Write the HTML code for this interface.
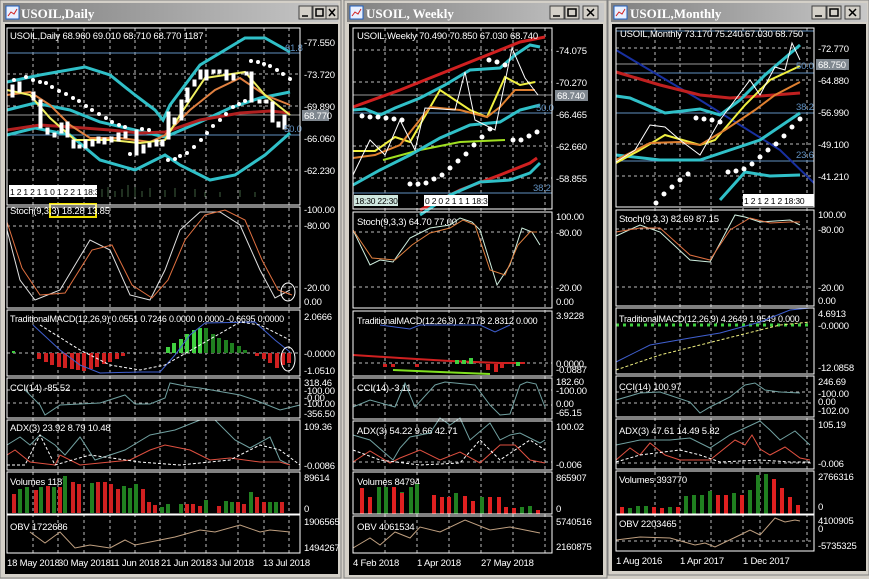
<!DOCTYPE html>
<html><head><meta charset="utf-8"><style>
html,body{margin:0;padding:0;width:869px;height:579px;overflow:hidden;background:#d4d0c8}
svg{position:absolute;left:0;top:0}
text{font-family:"Liberation Sans",sans-serif;font-size:9.5px;letter-spacing:-0.2px;fill:#fff}
.t{font-family:"Liberation Serif",serif;font-weight:bold;font-size:13px;fill:#fff;letter-spacing:0}
.g{stroke:#bbb;stroke-dasharray:3,3;stroke-width:1;fill:none}
.p{fill:none;stroke:#fff;stroke-width:1}
.cy{fill:none;stroke:#30c0c8;stroke-width:3}
.l{fill:none;stroke-width:1}
</style></head><body>
<svg width="869" height="579" viewBox="0 0 869 579">
<defs>
<linearGradient id="tb" x1="0" x2="1"><stop offset="0" stop-color="#808080"/><stop offset="1" stop-color="#c8c8c8"/></linearGradient>
</defs>
<rect x="0" y="0" width="341" height="578" fill="#d4d0c8" stroke="#808080"/>
<rect x="344" y="0" width="263" height="578" fill="#d4d0c8" stroke="#808080"/>
<rect x="608" y="0" width="261" height="575" fill="#d4d0c8" stroke="#808080"/>
<rect x="3" y="3" width="335" height="19" fill="url(#tb)"/>
<rect x="347" y="3" width="257" height="19" fill="url(#tb)"/>
<rect x="611" y="3" width="256" height="19" fill="url(#tb)"/>
<g><rect x="6" y="6" width="13" height="13" fill="#e8f0ff" stroke="#2060c0"/><path d="M8 16l3-4 3 2 3-5" stroke="#d02020" fill="none"/></g>
<g><rect x="350" y="6" width="13" height="13" fill="#e8f0ff" stroke="#2060c0"/><path d="M352 16l3-4 3 2 3-5" stroke="#d02020" fill="none"/></g>
<g><rect x="614" y="6" width="13" height="13" fill="#e8f0ff" stroke="#2060c0"/><path d="M616 16l3-4 3 2 3-5" stroke="#d02020" fill="none"/></g>
<text class="t" x="21" y="18">USOIL,Daily</text>
<text class="t" x="366" y="18">USOIL, Weekly</text>
<text class="t" x="630" y="18">USOIL,Monthly</text>
<g fill="#d4d0c8" stroke="#404040">
<rect x="299" y="6" width="13" height="13"/><rect x="313" y="6" width="13" height="13"/><rect x="326" y="6" width="12" height="13"/>
<rect x="550" y="6" width="14" height="13"/><rect x="565" y="6" width="14" height="13"/><rect x="583" y="6" width="15" height="13"/>
<rect x="812" y="6" width="14" height="13"/><rect x="827" y="6" width="14" height="13"/><rect x="845" y="6" width="15" height="13"/>
</g>
<g stroke="#000" stroke-width="1.5" fill="none">
<path d="M302 16h6M316 9h7v7h-7zM329 9l6 7M335 9l-6 7"/>
<path d="M553 16h7M568 9h8v7h-8zM587 9l7 7M594 9l-7 7"/>
<path d="M815 16h7M830 9h8v7h-8zM849 9l7 7M856 9l-7 7"/>
</g>
<rect x="5" y="24" width="333" height="550" fill="#000"/>
<rect x="349" y="24" width="254" height="551" fill="#000"/>
<rect x="612" y="24" width="254" height="547" fill="#000"/>

<!-- ================= WINDOW 1 ================= -->
<g>
<g class="g">
<path d="M33 28V553M58 28V553M84 28V553M110 28V553M135 28V553M160 28V553M185 28V553M206 28V553M238 28V553M264 28V553M289 28V553"/>
<path d="M7 74H300M7 106H300M7 170H300M7 226H300M7 287H300M7 353H300M7 390H300M7 403H300"/>
</g>
<path d="M7 53H300M7 135H300" stroke="#6090c0" fill="none"/>
<path d="M7 115H300" stroke="#999" fill="none"/>
<polyline class="cy" points="7,82 40,75 85,67 110,75 135,95 155,110 163,120 170,105 200,65 245,38 265,38 290,52"/>
<polyline class="cy" points="7,135 35,128 70,135 100,160 135,170 155,160 165,155 180,165 210,180 235,175 265,155 290,133"/>
<polyline class="cy" points="7,110 35,103 70,110 100,122 135,130 165,137 200,122 230,108 260,98 290,92"/>
<polyline points="7,130 40,125 70,127 110,130 140,133 165,132 200,120 240,113 270,111 290,113" fill="none" stroke="#b02020" stroke-width="3"/>
<polyline points="7,95 30,92 50,105 70,125 90,138 120,138 150,142 165,135 190,110 215,90 240,78 265,95 290,105" fill="none" stroke="#e08040" stroke-width="2"/>
<polyline points="7,90 30,95 50,118 75,140 110,140 140,143 165,140 180,115 205,78 245,72 265,95 290,115" fill="none" stroke="#f0f060" stroke-width="2"/>
<g fill="#fff" stroke="#fff">
<rect x="11" y="85" width="3" height="12"/><rect x="18" y="82" width="3" height="10"/><rect x="32" y="92" width="3" height="8"/><rect x="39" y="100" width="3" height="28"/><rect x="46" y="128" width="3" height="6"/><rect x="53" y="133" width="3" height="4"/><rect x="60" y="123" width="3" height="10"/><rect x="66" y="122" width="3" height="15"/><rect x="72" y="140" width="3" height="8"/><rect x="78" y="145" width="3" height="3"/><rect x="84" y="140" width="3" height="8"/><rect x="91" y="140" width="3" height="6"/><rect x="97" y="137" width="3" height="6"/><rect x="103" y="138" width="3" height="6"/><rect x="110" y="137" width="3" height="5"/><rect x="117" y="133" width="3" height="8"/><rect x="124" y="132" width="3" height="6"/><rect x="135" y="130" width="3" height="25"/><rect x="142" y="145" width="3" height="8"/><rect x="148" y="143" width="3" height="4"/><rect x="155" y="140" width="3" height="6"/><rect x="161" y="140" width="3" height="6"/><rect x="167" y="112" width="3" height="27"/><rect x="173" y="118" width="3" height="6"/><rect x="180" y="100" width="3" height="20"/><rect x="186" y="88" width="3" height="14"/><rect x="193" y="80" width="3" height="6"/><rect x="199" y="70" width="3" height="9"/><rect x="205" y="70" width="3" height="10"/><rect x="212" y="70" width="3" height="3"/><rect x="218" y="70" width="3" height="3"/><rect x="225" y="70" width="3" height="10"/><rect x="232" y="74" width="3" height="6"/><rect x="245" y="72" width="3" height="3"/><rect x="250" y="72" width="3" height="30"/><rect x="258" y="100" width="3" height="3"/><rect x="265" y="100" width="3" height="3"/><rect x="271" y="102" width="3" height="20"/><rect x="277" y="122" width="3" height="5"/><rect x="283" y="115" width="3" height="14"/>
</g>
<g fill="#fff">
<circle cx="14" cy="80" r="2"/><circle cx="26" cy="77" r="2"/><circle cx="33" cy="80" r="2"/><circle cx="40" cy="82" r="2"/><circle cx="46" cy="83" r="2"/><circle cx="52" cy="87" r="2"/><circle cx="59" cy="91" r="2"/><circle cx="66" cy="94" r="2"/><circle cx="73" cy="98" r="2"/><circle cx="79" cy="101" r="2"/><circle cx="86" cy="106" r="2"/><circle cx="92" cy="110" r="2"/><circle cx="99" cy="114" r="2"/><circle cx="106" cy="118" r="2"/><circle cx="112" cy="122" r="2"/><circle cx="119" cy="125" r="2"/><circle cx="125" cy="127" r="2"/><circle cx="130" cy="154" r="2"/><circle cx="142" cy="129" r="2"/><circle cx="149" cy="130" r="2"/><circle cx="168" cy="160" r="2"/><circle cx="175" cy="159" r="2"/><circle cx="180" cy="156" r="2"/><circle cx="187" cy="153" r="2"/><circle cx="194" cy="147" r="2"/><circle cx="201" cy="140" r="2"/><circle cx="207" cy="133" r="2"/><circle cx="213" cy="126" r="2"/><circle cx="220" cy="120" r="2"/><circle cx="226" cy="114" r="2"/><circle cx="233" cy="107" r="2"/><circle cx="239" cy="104" r="2"/><circle cx="245" cy="101" r="2"/><circle cx="251" cy="61" r="2"/><circle cx="258" cy="62" r="2"/><circle cx="264" cy="64" r="2"/><circle cx="270" cy="66" r="2"/><circle cx="277" cy="70" r="2"/><circle cx="283" cy="74" r="2"/><circle cx="290" cy="79" r="2"/>
</g>
<rect x="9" y="185" width="88" height="12" fill="#fff"/>
<text x="10" y="195" style="fill:#000;font-size:8.5px">1 2 1 2 1 1 0 1 2 2 1 18:30</text>
<path d="M102 197v-8M108 197v-10M115 197v-6M122 197v-8M128 197v-12M135 197v-10M142 197v-6M150 197v-9M165 197v-7M175 197v-9M195 197v-8M205 197v-5M220 197v-5M240 197v-7M255 197v-5" stroke="#406040" fill="none"/>
<text x="10" y="39">USOIL,Daily  68.960 69.010 68.710 68.770  1187</text>
<text x="285" y="51" style="fill:#6090c0">61.8</text>
<text x="284" y="132" style="fill:#6090c0">50.0</text>
<rect x="50" y="204" width="46" height="13" fill="none" stroke="#f0e000" stroke-width="2"/>
<text x="10" y="214">Stoch(9,3,3) 18.28 13.85</text>
<polyline class="l" stroke="#e0e0e0" points="7,230 20,280 35,300 60,290 90,240 110,250 130,295 150,300 165,270 180,230 200,212 220,212 240,225 260,270 275,298 290,290"/>
<polyline class="l" stroke="#e07040" points="7,222 22,268 40,295 65,293 92,250 112,245 132,285 152,298 168,280 185,240 205,215 225,210 245,220 262,260 278,290 292,295"/>
<ellipse cx="288" cy="292" rx="7" ry="9" fill="none" stroke="#fff"/>
<text x="10" y="322" style="font-size:9px">TraditionalMACD(12,26,9) 0.0551 0.7246 0.0000 0.0000 -0.6695 0.0000</text>
<g fill="#d02020"><rect x="37" y="353" width="4" height="6"/><rect x="44" y="353" width="4" height="9"/><rect x="50" y="353" width="4" height="12"/><rect x="57" y="353" width="4" height="14"/><rect x="63" y="353" width="4" height="15"/><rect x="70" y="353" width="4" height="16"/><rect x="76" y="353" width="4" height="17"/><rect x="82" y="353" width="4" height="18"/><rect x="89" y="353" width="4" height="16"/><rect x="95" y="353" width="4" height="14"/><rect x="102" y="353" width="4" height="11"/><rect x="108" y="353" width="4" height="9"/><rect x="115" y="353" width="4" height="6"/><rect x="121" y="353" width="4" height="3"/><rect x="255" y="353" width="4" height="3"/><rect x="262" y="353" width="4" height="6"/><rect x="268" y="353" width="4" height="10"/><rect x="275" y="353" width="4" height="15"/><rect x="281" y="353" width="4" height="12"/><rect x="287" y="353" width="4" height="10"/></g>
<g fill="#40d040"><rect x="12" y="351" width="3" height="2"/><rect x="166" y="347" width="4" height="6"/><rect x="172" y="343" width="4" height="10"/><rect x="179" y="339" width="4" height="14"/><rect x="185" y="334" width="4" height="19"/><rect x="192" y="330" width="4" height="23"/><rect x="198" y="328" width="4" height="25"/></g>
<g fill="#208020"><rect x="204" y="328" width="4" height="25"/><rect x="211" y="334" width="4" height="19"/><rect x="217" y="338" width="4" height="15"/><rect x="224" y="340" width="4" height="13"/><rect x="230" y="343" width="4" height="10"/><rect x="237" y="346" width="4" height="7"/><rect x="243" y="350" width="4" height="3"/></g>
<polyline class="l" stroke="#4060d0" points="33,325 60,350 80,365 100,373 140,372 160,372 175,355 190,335 205,323 255,322 275,340 290,352"/>
<polyline class="l" stroke="#fff" stroke-dasharray="3,2" points="40,325 80,350 110,365 140,370 165,365 200,345 240,322 260,325 290,340"/>
<ellipse cx="288" cy="359" rx="7" ry="12" fill="none" stroke="#fff"/>
<text x="10" y="391">CCI(14) -85.52</text>
<polyline class="l" stroke="#70a0a0" points="25,390 40,405 45,415 60,405 100,403 125,395 135,404 150,404 165,398 170,383 185,386 200,388 240,395 255,400 280,410 300,405"/>
<text x="10" y="431">ADX(3) 23.92 8.79 10.48</text>
<polyline class="l" stroke="#70a0a0" points="7,445 20,437 30,445 40,435 55,445 65,455 80,437 95,460 125,450 150,435 175,430 200,420 215,420 235,440 250,448 270,437 280,460 290,465"/>
<polyline class="l" stroke="#e05040" points="7,455 15,450 30,462 55,465 60,455 80,465 110,462 130,460 150,450 165,445 190,450 210,460 230,458 260,462 280,462 290,465"/>
<polyline class="l" stroke="#fff" stroke-dasharray="3,2" points="7,465 25,465 40,435 55,465 90,455 140,462 180,465 230,460 260,445 280,450 300,465"/>
<text x="10" y="485">Volumes 1187</text>
<g fill="#d02020"><rect x="12" y="494" width="4" height="19"/><rect x="34" y="490" width="4" height="23"/><rect x="46" y="486" width="4" height="27"/><rect x="58" y="487" width="4" height="26"/><rect x="71" y="482" width="4" height="31"/><rect x="77" y="484" width="4" height="29"/><rect x="96" y="482" width="4" height="31"/><rect x="103" y="482" width="4" height="31"/><rect x="109" y="484" width="4" height="29"/><rect x="116" y="489" width="4" height="24"/><rect x="141" y="489" width="4" height="24"/><rect x="147" y="502" width="4" height="11"/><rect x="153" y="505" width="4" height="8"/><rect x="185" y="504" width="4" height="9"/><rect x="191" y="504" width="4" height="9"/><rect x="198" y="506" width="4" height="7"/><rect x="217" y="506" width="4" height="7"/><rect x="236" y="502" width="4" height="11"/><rect x="242" y="504" width="4" height="9"/><rect x="255" y="497" width="4" height="16"/><rect x="262" y="502" width="4" height="11"/><rect x="280" y="502" width="4" height="11"/></g>
<g fill="#208020"><rect x="18" y="489" width="4" height="24"/><rect x="25" y="487" width="4" height="26"/><rect x="39" y="487" width="4" height="26"/><rect x="52" y="487" width="4" height="26"/><rect x="63" y="476" width="4" height="37"/><rect x="90" y="483" width="4" height="30"/><rect x="122" y="486" width="4" height="27"/><rect x="128" y="488" width="4" height="25"/><rect x="134" y="484" width="4" height="29"/><rect x="160" y="507" width="4" height="6"/><rect x="166" y="504" width="4" height="9"/><rect x="179" y="504" width="4" height="9"/><rect x="204" y="500" width="4" height="13"/><rect x="224" y="501" width="4" height="12"/><rect x="230" y="502" width="4" height="11"/><rect x="249" y="492" width="4" height="21"/><rect x="268" y="502" width="4" height="11"/><rect x="274" y="502" width="4" height="11"/></g>
<text x="10" y="530">OBV 1722686</text>
<polyline class="l" stroke="#c0a080" points="30,532 45,543 60,532 75,548 90,545 110,548 125,540 135,545 150,542 175,537 200,530 215,532 240,525 260,532 270,530 290,532"/>
<g fill="none" stroke="#fff"><rect x="7" y="28" width="293" height="177"/><rect x="7" y="207" width="293" height="101"/><rect x="7" y="310" width="293" height="66"/><rect x="7" y="378" width="293" height="40"/><rect x="7" y="420" width="293" height="50"/><rect x="7" y="472" width="293" height="42"/><rect x="7" y="515" width="293" height="38"/></g>
<g>
<text x="304" y="46">-77.550</text><text x="304" y="78">-73.720</text><text x="304" y="110">-69.890</text><rect x="302" y="110" width="27" height="11" fill="#808890"/><text x="304" y="119">68.770</text><text x="304" y="142">-66.060</text><text x="304" y="174">-62.230</text>
<text x="304" y="213">-100.00</text><text x="304" y="229">-80.00</text><text x="304" y="291">-20.00</text><text x="304" y="305">0.00</text>
<text x="304" y="320">2.0666</text><text x="304" y="357">-0.0000</text><text x="304" y="374">-1.0510</text>
<text x="304" y="386">318.46</text><text x="304" y="394">-100.00</text><text x="304" y="401">-0.00</text><text x="304" y="407">-100.00</text><text x="304" y="417">-356.50</text>
<text x="304" y="430">109.36</text><text x="304" y="469">-0.0086</text>
<text x="304" y="481">89614</text><text x="304" y="512">0</text>
<text x="304" y="525">1906565</text><text x="304" y="551">1494267</text>
<text x="7" y="566">18 May 2018</text><text x="58" y="566">30 May 2018</text><text x="110" y="566">11 Jun 2018</text><text x="161" y="566">21 Jun 2018</text><text x="212" y="566">3 Jul 2018</text><text x="263" y="566">13 Jul 2018</text>
</g>
</g>

<!-- ================= WINDOW 2 ================= -->
<g>
<g class="g">
<path d="M385 28V553M417 28V553M449 28V553M481 28V553M513 28V553M545 28V553"/>
<path d="M353 50H552M353 82H552M353 146H552M353 178H552M353 232H552M353 287H552M353 363H552M353 390H552M353 405H552M353 462H552"/>
</g>
<path d="M353 113H552M353 193H552" stroke="#6090c0" fill="none"/>
<path d="M353 95H552" stroke="#999" fill="none"/>
<polyline points="353,107 400,90 450,70 520,42 545,37" fill="none" stroke="#d02020" stroke-width="3"/>
<polyline points="420,210 460,190 500,175 530,163 537,158" fill="none" stroke="#d02020" stroke-width="3"/>
<polyline points="383,160 420,150 460,142 505,140" fill="none" stroke="#a0e020" stroke-width="2"/>
<polyline class="cy" points="353,110 365,109 380,115 395,108 420,98 445,85 470,70 500,68 515,55 530,45 540,47"/>
<polyline class="cy" points="353,185 380,170 410,155 440,138 470,125 500,122 520,110 540,105"/>
<polyline class="cy" points="420,215 450,195 480,182 510,180 530,173 540,163"/>
<polyline points="353,151 375,151 395,137 410,142 440,90 470,110 487,117 505,77 520,85 535,82" fill="none" stroke="#f0f040" stroke-width="2"/>
<polyline points="353,158 375,155 400,145 430,107 460,110 487,117 500,107 515,90 535,90" fill="none" stroke="#e08030" stroke-width="2"/>
<polyline class="l" stroke="#fff" points="353,175 370,140 385,155 400,120 415,150 425,108 455,110 465,72 475,120 495,130 512,48 525,78 538,95"/>
<g fill="#fff"><circle cx="362" cy="116" r="2.5"/><circle cx="370" cy="117" r="2.5"/><circle cx="378" cy="117" r="2.5"/><circle cx="386" cy="118" r="2.5"/><circle cx="394" cy="119" r="2.5"/><circle cx="402" cy="120" r="2.5"/><circle cx="410" cy="184" r="2.5"/><circle cx="418" cy="184" r="2.5"/><circle cx="426" cy="183" r="2.5"/><circle cx="434" cy="179" r="2.5"/><circle cx="442" cy="175" r="2.5"/><circle cx="450" cy="168" r="2.5"/><circle cx="458" cy="161" r="2.5"/><circle cx="466" cy="154" r="2.5"/><circle cx="474" cy="145" r="2.5"/><circle cx="482" cy="137" r="2.5"/><circle cx="490" cy="129" r="2.5"/><circle cx="489" cy="60" r="2.5"/><circle cx="497" cy="62" r="2.5"/><circle cx="505" cy="65" r="2.5"/><circle cx="513" cy="140" r="2.5"/><circle cx="521" cy="140" r="2.5"/><circle cx="529" cy="136" r="2.5"/><circle cx="537" cy="132" r="2.5"/></g>
<rect x="354" y="195" width="44" height="11" fill="#d0e8e0"/><rect x="424" y="195" width="64" height="11" fill="#fff"/>
<text x="355" y="204" style="fill:#000;font-size:8.5px">18:30 22:30</text>
<text x="425" y="204" style="fill:#000;font-size:8.5px">0 2 0 2 1 1 1 18:30</text>
<text x="357" y="39">USOIL,Weekly  70.490 70.850 67.030 68.740</text>
<text x="536" y="111" style="fill:#6090c0">50.0</text>
<text x="533" y="191" style="fill:#6090c0">38.2</text>
<text x="357" y="225">Stoch(9,3,3) 64.70 77.00</text>
<polyline class="l" stroke="#d0f0e0" points="353,230 370,265 380,260 393,262 410,238 430,228 450,225 460,218 472,222 480,230 497,285 510,265 522,228 532,232 540,245"/>
<polyline class="l" stroke="#e08040" points="353,230 372,258 395,260 412,245 430,233 450,228 463,220 475,225 490,270 505,275 518,245 530,232 537,232"/>
<text x="357" y="324" style="font-size:9px">TraditionalMACD(12,26,9) 2.7178 2.8312 0.000</text>
<polyline class="l" stroke="#4060d0" points="380,325 410,329 420,325 480,325 495,332 510,325"/>
<polyline points="353,355 400,358 450,361 500,363 525,363" fill="none" stroke="#d02020" stroke-width="2"/>
<polyline points="393,370 440,372 490,374" fill="none" stroke="#80e020" stroke-width="2"/>
<g fill="#40d040"><rect x="455" y="360" width="4" height="4"/><rect x="462" y="360" width="4" height="4"/><rect x="469" y="358" width="4" height="6"/><rect x="516" y="362" width="4" height="4"/></g>
<g fill="#d02020"><rect x="383" y="364" width="4" height="3"/><rect x="391" y="364" width="4" height="3"/><rect x="415" y="364" width="4" height="3"/><rect x="486" y="364" width="4" height="6"/><rect x="494" y="364" width="4" height="8"/><rect x="500" y="364" width="4" height="4"/></g>
<text x="357" y="391">CCI(14) -3.11</text>
<polyline class="l" stroke="#70a0a0" points="353,407 370,400 395,407 405,383 415,407 435,385 445,382 475,385 490,405 500,415 510,414 520,385 527,382 536,384 545,407"/>
<text x="357" y="434">ADX(3) 54.22 9.66 42.71</text>
<polyline class="l" stroke="#70a0a0" points="353,435 370,440 393,460 400,448 410,437 430,433 440,418 450,425 460,418 470,440 490,423 500,440 510,435 520,433 540,443 545,440"/>
<polyline class="l" stroke="#e05040" points="353,462 370,451 390,463 400,458 420,450 440,460 460,452 480,463 500,445 515,445 530,460 545,463"/>
<polyline class="l" stroke="#fff" stroke-dasharray="3,2" points="353,450 380,460 420,465 460,463 480,440 500,460 530,440 545,450"/>
<text x="357" y="485">Volumes 84794</text>
<g fill="#208020"><rect x="377" y="487" width="4" height="27"/><rect x="384" y="487" width="4" height="27"/><rect x="400" y="492" width="4" height="22"/><rect x="409" y="487" width="4" height="27"/><rect x="415" y="484" width="4" height="30"/><rect x="454" y="493" width="4" height="21"/><rect x="480" y="497" width="4" height="17"/><rect x="520" y="507" width="4" height="7"/><rect x="528" y="506" width="4" height="8"/></g>
<g fill="#e02020"><rect x="360" y="488" width="4" height="26"/><rect x="368" y="497" width="4" height="17"/><rect x="392" y="487" width="4" height="27"/><rect x="400" y="493" width="4" height="21"/><rect x="432" y="495" width="4" height="19"/><rect x="440" y="497" width="4" height="17"/><rect x="447" y="497" width="4" height="17"/><rect x="463" y="496" width="4" height="18"/><rect x="471" y="501" width="4" height="13"/><rect x="488" y="497" width="4" height="17"/><rect x="497" y="497" width="4" height="17"/><rect x="504" y="507" width="4" height="7"/><rect x="512" y="508" width="4" height="6"/><rect x="536" y="510" width="4" height="4"/></g>
<text x="357" y="530">OBV 4061534</text>
<polyline class="l" stroke="#c0a080" points="353,548 370,538 380,545 395,532 410,538 420,527 440,532 465,520 490,530 510,527 525,530 540,533"/>
<g fill="none" stroke="#fff"><rect x="353" y="28" width="199" height="181"/><rect x="353" y="212" width="199" height="96"/><rect x="353" y="311" width="199" height="65"/><rect x="353" y="378" width="199" height="41"/><rect x="353" y="421" width="199" height="49"/><rect x="353" y="472" width="199" height="42"/><rect x="353" y="516" width="199" height="37"/></g>
<g>
<text x="556" y="54">-74.075</text><text x="556" y="86">-70.270</text><rect x="555" y="90" width="33" height="11" fill="#808890"/><text x="557" y="99">68.740</text><text x="556" y="118">-66.465</text><text x="556" y="150">-62.660</text><text x="556" y="182">-58.855</text>
<text x="556" y="220">100.00</text><text x="556" y="236">-80.00</text><text x="556" y="291">-20.00</text><text x="556" y="305">0.00</text>
<text x="556" y="319">3.9228</text><text x="556" y="367">0.0000</text><text x="556" y="373">-0.0887</text>
<text x="556" y="385">182.60</text><text x="556" y="394">-100.00</text><text x="556" y="407">0.00</text><text x="556" y="416">-65.15</text>
<text x="556" y="430">100.02</text><text x="556" y="468">-0.006</text>
<text x="556" y="481">865907</text><text x="556" y="512">0</text>
<text x="556" y="525">5740516</text><text x="556" y="550">2160875</text>
<text x="353" y="566">4 Feb 2018</text><text x="417" y="566">1 Apr 2018</text><text x="481" y="566">27 May 2018</text>
</g>
</g>

<!-- ================= WINDOW 3 ================= -->
<g>
<g class="g">
<path d="M655 28V550M680 28V550M711 28V550M743 28V550M760 28V550M807 28V550"/>
<path d="M616 48H814M616 80H814M616 144H814M616 176H814M616 229H814M616 287H814M616 392H814M616 403H814M616 463H814M616 541H814"/>
</g>
<path d="M616 31H814M616 73H814M616 113H814M616 161H814" stroke="#6090c0" fill="none"/>
<path d="M616 64H814" stroke="#999" fill="none"/>
<polyline points="616,50 700,100 780,150 814,183" fill="none" stroke="#1830a0" stroke-width="2"/>
<polyline points="616,72 660,85 700,95 730,98 760,96 800,93" fill="none" stroke="#c02020" stroke-width="3"/>
<polyline class="cy" points="616,96 630,98 665,113 700,109 720,115 740,100 765,75 800,45"/>
<polyline class="cy" points="616,155 660,160 700,160 730,150 760,140 800,113"/>
<polyline class="cy" points="720,200 745,172 770,176 800,175"/>
<polyline points="616,163 640,150 665,135 700,145 715,140 745,105 770,80 800,66" fill="none" stroke="#f0f040" stroke-width="2"/>
<polyline points="616,160 650,143 680,142 700,145 725,130 755,110 775,95 800,82" fill="none" stroke="#e08030" stroke-width="2"/>
<polyline class="l" stroke="#fff" points="616,162 635,150 650,125 665,127 680,140 700,155 720,120 750,80 760,95 775,67 785,70 792,43 800,60"/>
<g fill="#fff"><circle cx="664" cy="194" r="2.5"/><circle cx="672" cy="187" r="2.5"/><circle cx="680" cy="180" r="2.5"/><circle cx="688" cy="174" r="2.5"/><circle cx="696" cy="118" r="2.5"/><circle cx="704" cy="119" r="2.5"/><circle cx="712" cy="120" r="2.5"/><circle cx="720" cy="122" r="2.5"/><circle cx="728" cy="172" r="2.5"/><circle cx="736" cy="171" r="2.5"/><circle cx="744" cy="169" r="2.5"/><circle cx="752" cy="164" r="2.5"/><circle cx="760" cy="157" r="2.5"/><circle cx="768" cy="150" r="2.5"/><circle cx="776" cy="144" r="2.5"/><circle cx="784" cy="136" r="2.5"/><circle cx="792" cy="127" r="2.5"/><circle cx="800" cy="119" r="2.5"/><circle cx="656" cy="203" r="2.5"/></g>
<rect x="743" y="194" width="71" height="12" fill="#fff"/>
<text x="744" y="204" style="fill:#000;font-size:8.5px">1 2 1 2 1 2 18:30</text>
<text x="620" y="37">USOIL,Monthly  73.170 75.240 67.030 68.750</text>
<text x="796" y="69" style="fill:#6090c0">50.0</text>
<text x="796" y="110" style="fill:#6090c0">38.2</text>
<text x="796" y="158" style="fill:#6090c0">23.6</text>
<text x="619" y="222">Stoch(9,3,3) 82.69 87.15</text>
<polyline class="l" stroke="#d0f0e0" points="616,236 640,225 660,232 690,260 710,262 735,215 745,217 760,222 790,220 800,225"/>
<polyline class="l" stroke="#e07040" points="616,232 640,228 660,228 690,255 710,260 730,230 750,218 770,223 790,222 800,222"/>
<text x="619" y="322" style="font-size:9px">TraditionalMACD(12,26,9) 4.2649 1.9549 0.000</text>
<path d="M616 325H810" stroke="#40d040" stroke-width="3" stroke-dasharray="3,4" fill="none"/>
<polyline class="l" stroke="#4060d0" points="616,362 650,345 690,338 720,333 760,322 790,310 810,308"/>
<polyline class="l" stroke="#f0f080" stroke-dasharray="3,2" points="616,370 660,355 700,345 740,335 780,325 810,322"/>
<text x="619" y="390">CCI(14) 100.97</text>
<polyline class="l" stroke="#70a0a0" points="616,400 640,393 660,392 690,402 700,413 710,407 730,397 745,385 755,383 765,390 780,392 800,393"/>
<text x="619" y="434">ADX(3) 47.61 14.49 5.82</text>
<polyline class="l" stroke="#70a0a0" points="616,445 640,440 670,440 690,438 710,448 730,435 760,421 770,430 780,440 795,431 810,445"/>
<polyline class="l" stroke="#e05040" points="616,460 630,448 640,455 650,443 665,455 680,460 710,460 735,440 745,445 752,435 760,449 770,455 785,447 800,458 810,460"/>
<polyline class="l" stroke="#fff" stroke-dasharray="3,2" points="616,462 640,455 680,450 700,455 720,462 760,460 790,462 810,462"/>
<text x="619" y="483">Volumes 393770</text>
<g fill="#208020"><rect x="628" y="508" width="4" height="6"/><rect x="636" y="506" width="4" height="8"/><rect x="644" y="506" width="4" height="8"/><rect x="668" y="507" width="4" height="7"/><rect x="684" y="496" width="4" height="18"/><rect x="692" y="495" width="4" height="19"/><rect x="700" y="495" width="4" height="19"/><rect x="708" y="491" width="4" height="23"/><rect x="732" y="493" width="4" height="21"/><rect x="748" y="490" width="4" height="24"/><rect x="756" y="475" width="4" height="39"/><rect x="764" y="474" width="4" height="40"/></g>
<g fill="#e02020"><rect x="620" y="507" width="4" height="7"/><rect x="652" y="507" width="4" height="7"/><rect x="660" y="508" width="4" height="6"/><rect x="676" y="507" width="4" height="7"/><rect x="716" y="495" width="4" height="19"/><rect x="724" y="495" width="4" height="19"/><rect x="740" y="495" width="4" height="19"/><rect x="772" y="479" width="4" height="35"/><rect x="780" y="488" width="4" height="26"/><rect x="788" y="497" width="4" height="17"/><rect x="796" y="505" width="4" height="9"/></g>
<text x="619" y="527">OBV 2203465</text>
<polyline class="l" stroke="#c0a080" points="616,540 640,537 670,538 695,545 705,543 715,547 740,535 750,530 760,535 775,518 785,522 795,520 800,521"/>
<g fill="none" stroke="#fff"><rect x="616" y="28" width="198" height="179"/><rect x="616" y="210" width="198" height="96"/><rect x="616" y="308" width="198" height="66"/><rect x="616" y="376" width="198" height="41"/><rect x="616" y="419" width="198" height="50"/><rect x="616" y="471" width="198" height="43"/><rect x="616" y="515" width="198" height="36"/></g>
<g>
<text x="818" y="52">-72.770</text><rect x="816" y="59" width="33" height="11" fill="#808890"/><text x="818" y="68">68.750</text><text x="818" y="84">-64.880</text><text x="818" y="116">-56.990</text><text x="818" y="148">-49.100</text><text x="818" y="180">-41.210</text>
<text x="818" y="218">100.00</text><text x="818" y="233">-80.00</text><text x="818" y="291">-20.00</text><text x="818" y="304">0.00</text>
<text x="818" y="317">4.6913</text><text x="818" y="329">-0.0000</text><text x="818" y="371">-12.0858</text>
<text x="818" y="385">246.69</text><text x="818" y="397">-100.00</text><text x="818" y="405">0.00</text><text x="818" y="414">-102.00</text>
<text x="818" y="428">105.19</text><text x="818" y="467">-0.006</text>
<text x="818" y="480">2766316</text><text x="818" y="510">0</text>
<text x="818" y="524">4100905</text><text x="818" y="532">0</text><text x="818" y="549">-5735325</text>
<text x="616" y="564">1 Aug 2016</text><text x="680" y="564">1 Apr 2017</text><text x="743" y="564">1 Dec 2017</text>
</g>
</g>
</svg>
</body></html>
